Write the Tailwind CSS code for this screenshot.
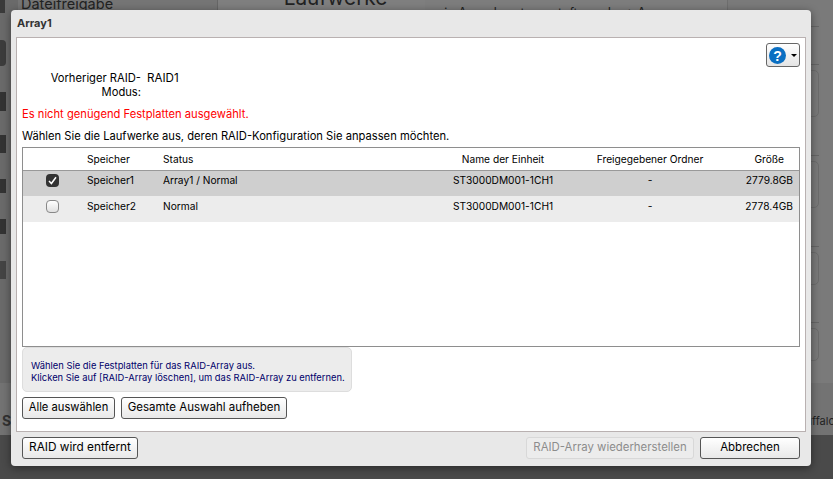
<!DOCTYPE html>
<html><head><meta charset="utf-8"><script src="https://cdn.jsdelivr.net/npm/@tailwindcss/browser@4"></script></head>
<body class="m-0 overflow-hidden">
<div class="relative w-[833px] h-[479px] overflow-hidden bg-[#7f7f7f] font-['Inter','Liberation_Sans',sans-serif] text-[11.2px] text-black leading-none">
  <!-- dimmed page behind the dialog -->
  <div class="flex h-[383px]">
    <div class="w-[18px] bg-[#6a6a6a] flex flex-col items-start">
      <div class="w-[5px] h-[13px] bg-[#3a3a3a]"></div>
      <div class="mt-[27px] w-[6px] h-[26px] bg-[#3c3c3c] rounded-r-sm"></div>
      <div class="mt-[26px] w-[6px] h-[19px] bg-[#333]"></div>
      <div class="mt-[24px] w-[6px] h-[18px] bg-[#333]"></div>
      <div class="mt-[26px] w-[6px] h-[14px] bg-[#333]"></div>
      <div class="mt-[26px] w-[6px] h-[15px] bg-[#333]"></div>
      <div class="mt-[27px] w-[6px] h-[18px] bg-[#444]"></div>
    </div>
    <div class="w-[200px] bg-[#757575] border-r border-[#666] pl-[3px] text-[14.5px] text-[#222] -mt-[3px]">Dateifreigabe</div>
    <div class="w-[207px] text-center text-[20.8px] text-[#222] -mt-[12px] h-[30px] pl-[28px]">Laufwerke</div>
    <div class="w-[303px] bg-[#7d7d7d] border-r border-[#6e6e6e] pl-[12px] pt-[7px] text-[12.5px] text-[#222] overflow-hidden whitespace-nowrap">ein Array herutergestuft wurde: + Array</div>
    <div class="flex-1 bg-[#7a7a7a] pr-[14px] flex flex-col pt-[26px]">
      <div class="h-px bg-[#666]"></div>
      <div class="h-px bg-[#666] mt-[37px]"></div>
      <div class="h-[47px] mt-[5px] rounded-[5px] border border-[#6c6c6c]"></div>
      <div class="h-px bg-[#666] mt-[38px]"></div>
      <div class="h-[47px] mt-[5px] rounded-[5px] border border-[#6c6c6c]"></div>
      <div class="h-px bg-[#666] mt-[38px]"></div>
      <div class="h-[33px] mt-[5px] rounded-[5px] border border-[#6c6c6c]"></div>
      <div class="h-px bg-[#666] mt-[37px]"></div>
      <div class="h-[33px] mt-[5px] rounded-[5px] border border-[#6c6c6c]"></div>
    </div>
  </div>
  <div class="h-[52px] bg-[#737373] flex items-center justify-between pt-[24px]">
    <span class="pl-[2px] text-[14px] font-bold text-[#333]">S</span>
    <span class="text-[11px] text-[#222] -mr-[2px]">Buffalo</span>
  </div>
  <div class="h-[44px] bg-[#4a4a4a]"></div>

  <!-- dialog -->
  <div class="absolute left-[11px] top-[10px] w-[800px] h-[456px] bg-[#e8e8e8] rounded-[4px] shadow-[0_2px_8px_rgba(0,0,0,0.45)] flex flex-col px-[5px]">
    <div class="h-[27px] flex items-center pl-[1px] text-[11px] font-bold text-[#333]">Array1</div>
    <div class="h-[395px] bg-white border border-[#b9b1b1] flex flex-col px-[5px] relative">
      <div class="absolute right-[5px] top-[5px] w-[34px] h-[24px] rounded-[3px] border border-[#666] bg-gradient-to-b from-white to-[#e4e4e4] flex items-center pl-[2px] gap-[5px]">
        <svg width="17" height="17" viewBox="0 0 17 17"><circle cx="8.5" cy="8.5" r="8.5" fill="#0a6fc2"/><text x="8.5" y="13.5" text-anchor="middle" font-size="14" font-weight="700" fill="#fff" font-family="Liberation Sans">?</text></svg>
        <div class="w-0 h-0 border-x-[3px] border-x-transparent border-t-[3px] border-t-black"></div>
      </div>
      <div class="flex mt-[33px]">
        <div class="w-[119px] text-right leading-[14px]">Vorheriger RAID-<br>Modus:</div>
        <div class="ml-[6px] leading-[14px] text-[11.6px]">RAID1</div>
      </div>
      <div class="mt-[8px] text-[#f00] h-[14px] leading-[14px]">Es nicht genügend Festplatten ausgewählt.</div>
      <div class="mt-[8px] h-[14px] leading-[14px]">Wählen Sie die Laufwerke aus, deren RAID-Konfiguration Sie anpassen möchten.</div>
      <div class="mt-[4px] h-[200px] border border-[#8e8e8e] text-[10.2px] flex flex-col">
        <div class="flex h-[23px] items-center border-b border-[#999] shrink-0">
          <div class="w-[64px]"></div><div class="w-[76px]">Speicher</div><div class="w-[250px]">Status</div>
          <div class="w-[180px] text-center">Name der Einheit</div><div class="w-[114px] text-center">Freigegebener Ordner</div><div class="flex-1 text-right pr-[15px]">Größe</div>
        </div>
        <div class="flex h-[25px] items-center bg-[#cfcfcf] pb-[7px]">
          <div class="w-[64px] pl-[23px]"><div class="w-[13px] h-[13px] rounded-[4px] bg-[#333] flex items-center justify-center"><svg width="9" height="9" viewBox="0 0 9 9"><path d="M1 5l2.4 2.5L8 1.2" fill="none" stroke="#fff" stroke-width="1.5"/></svg></div></div>
          <div class="w-[76px]">Speicher1</div><div class="w-[250px]">Array1 / Normal</div>
          <div class="w-[180px] text-center">ST3000DM001-1CH1</div><div class="w-[114px] text-center">-</div><div class="flex-1 text-right pr-[6px]">2779.8GB</div>
        </div>
        <div class="flex h-[26px] items-center bg-[#ececec] pb-[6px]">
          <div class="w-[64px] pl-[23px]"><div class="w-[13px] h-[13px] rounded-[4px] border border-[#888] bg-gradient-to-b from-white to-[#e0e0e0]"></div></div>
          <div class="w-[76px]">Speicher2</div><div class="w-[250px]">Normal</div>
          <div class="w-[180px] text-center">ST3000DM001-1CH1</div><div class="w-[114px] text-center">-</div><div class="flex-1 text-right pr-[6px]">2778.4GB</div>
        </div>
      </div>
      <div class="w-[330px] h-[45px] rounded-[5px] border border-[#ddd] bg-[#ececec] pl-[8px] pt-[12px] text-[9.4px] text-[#00006a] leading-[12px]">
        Wählen Sie die Festplatten für das RAID-Array aus.<br>Klicken Sie auf [RAID-Array löschen], um das RAID-Array zu entfernen.
      </div>
      <div class="flex gap-[6px] mt-[5px]">
        <button class="h-[22px] w-[93px] rounded-[3px] border border-[#555] bg-gradient-to-b from-white to-[#e8e8e8]">Alle auswählen</button>
        <button class="h-[22px] w-[166px] rounded-[3px] border border-[#555] bg-gradient-to-b from-white to-[#e8e8e8] text-[11.5px]">Gesamte Auswahl aufheben</button>
      </div>
    </div>
    <div class="flex items-center mt-[5px] px-[6px]">
      <button class="h-[22px] w-[116px] rounded-[3px] border border-[#555] bg-gradient-to-b from-white to-[#e8e8e8] text-[11.8px]">RAID wird entfernt</button>
      <button class="ml-auto h-[22px] w-[168px] rounded-[3px] border border-[#d8d8d8] bg-[#ececec] text-[#8c8c8c] text-[11.4px]">RAID-Array wiederherstellen</button>
      <button class="ml-[6px] h-[22px] w-[100px] rounded-[3px] border border-[#555] bg-gradient-to-b from-white to-[#e8e8e8] text-[11.5px]">Abbrechen</button>
    </div>
  </div>
</div>
</body></html>
